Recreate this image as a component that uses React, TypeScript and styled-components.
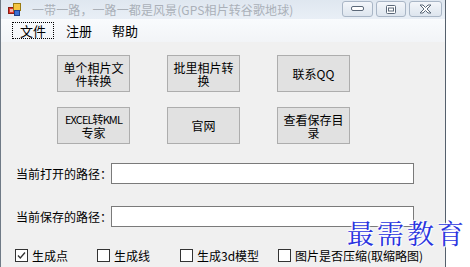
import * as React from "react";
import styled, { createGlobalStyle } from "styled-components";

const cjk = `"Noto Sans CJK SC", "Noto Sans", sans-serif`;

const Global = createGlobalStyle`
	html, body {
		margin: 0;
		padding: 0;
		background: #ffffff;
	}
	body {
		font-family: ${cjk};
		font-size: 12px;
		color: #000;
	}
`;

const Page = styled.div`
	position: relative;
	display: flex;
	width: 470px;
	height: 267px;
	overflow: hidden;
	background: #ffffff;
`;

const Window = styled.div`
	display: flex;
	flex-direction: column;
	width: 446px;
	height: 267px;
	box-sizing: border-box;
	border-left: 1px solid #6f7a86;
	border-right: 1px solid #55606c;
	background: #f0f0f0;
`;

const TitleBar = styled.div`
	display: flex;
	align-items: center;
	height: 19px;
	padding-left: 7px;
	background: linear-gradient(#dfe7f0, #e9eff6);
`;

const Title = styled.div`
	flex: 1;
	margin-left: 11px;
	font-size: 12px;
	color: #aab0b8;
	white-space: nowrap;
	letter-spacing: 0.1px;
`;

const Controls = styled.div`
	display: flex;
	gap: 3px;
	align-self: flex-start;
	margin-top: 1px;
	margin-right: 3px;
`;

const CtrlButton = styled.div<{ $w: number }>`
	display: flex;
	align-items: center;
	justify-content: center;
	width: ${(p) => p.$w}px;
	height: 16px;
	box-sizing: border-box;
	border: 1px solid #a9b6c6;
	border-radius: 3px;
	background: linear-gradient(#f3f6fa, #dde5ee);
`;

const MenuBar = styled.div`
	display: flex;
	align-items: center;
	height: 23px;
	padding-left: 11px;
	background: linear-gradient(#f9fbfd, #f2f4f7);
	border-bottom: 1px solid #f0f0f0;
`;

const MenuItem = styled.div<{ $focus?: boolean }>`
	display: flex;
	align-items: center;
	justify-content: center;
	height: 17px;
	padding: 0 7px;
	margin-right: 4px;
	box-sizing: border-box;
	border: 1px dotted ${(p) => (p.$focus ? "#000" : "transparent")};
	font-size: 13px;
	line-height: 1;
`;

const Body = styled.div`
	display: flex;
	flex-direction: column;
	padding: 12px 0 0 0;
`;

const ButtonGrid = styled.div`
	display: grid;
	grid-template-columns: repeat(3, 73px);
	grid-auto-rows: 37px;
	column-gap: 37px;
	row-gap: 15px;
	margin-left: 56px;
`;

const FormButton = styled.div`
	display: flex;
	flex-direction: column;
	align-items: center;
	justify-content: center;
	box-sizing: border-box;
	border: 1px solid #adadad;
	background: #e1e1e1;
	text-align: center;
	font-size: 12px;
	line-height: 13px;
`;

const ButtonLine = styled.span<{ $narrow?: boolean }>`
	white-space: nowrap;
	letter-spacing: ${(p) => (p.$narrow ? "-0.9px" : "0")};
	font-size: ${(p) => (p.$narrow ? "11px" : "12px")};
`;

const PathRow = styled.div<{ $top: number }>`
	display: flex;
	align-items: center;
	margin-top: ${(p) => p.$top}px;
	margin-left: 15px;
`;

const PathLabel = styled.div`
	width: 95px;
	font-size: 12px;
	white-space: nowrap;
`;

const PathInput = styled.div`
	width: 303px;
	height: 21px;
	box-sizing: border-box;
	border: 1px solid #7a7a7a;
	background: #ffffff;
`;

const CheckRow = styled.div`
	display: flex;
	align-items: center;
	margin-top: 20px;
	margin-left: 14px;
`;

const Check = styled.label<{ $w: number }>`
	display: flex;
	align-items: center;
	gap: 4px;
	width: ${(p) => p.$w}px;
	font-size: 12px;
	white-space: nowrap;
`;

const Box = styled.span`
	display: flex;
	align-items: center;
	justify-content: center;
	width: 13px;
	height: 13px;
	box-sizing: border-box;
	border: 1px solid #333;
	background: #fff;
`;

const Watermark = styled.div`
	position: absolute;
	left: 347px;
	top: 213px;
	font-family: "Noto Serif CJK SC", "Noto Sans CJK SC", serif;
	font-size: 27px;
	letter-spacing: 3px;
	color: #2b34e0;
	text-shadow: 0 0 2px #fff, 0 0 2px #fff, 1px 1px 1px #fff, -1px -1px 1px #fff;
	white-space: nowrap;
`;

const AppIcon = () => (
	<svg width="13" height="13" viewBox="0 0 13 13">
		<rect x="0.5" y="4.5" width="6" height="6" fill="#e03a2c" stroke="#8a1d14" />
		<rect x="5.5" y="0.5" width="7" height="7" fill="#f4c542" stroke="#9a7a10" />
		<rect x="6.5" y="7.5" width="5" height="5" fill="#3b6fd4" stroke="#1c3f8a" />
		<rect x="2" y="6" width="3" height="3" fill="#fff" opacity="0.6" />
	</svg>
);

const Tick = () => (
	<svg width="11" height="11" viewBox="0 0 11 11">
		<path d="M2 5.5 L4.3 8 L9 2.5" fill="none" stroke="#333" strokeWidth="1.3" />
	</svg>
);

export default function App() {
	const buttons = [
		["单个相片文", "件转换"],
		["批里相片转", "换"],
		["联系QQ"],
		["EXCEL转KML", "专家"],
		["官网"],
		["查看保存目", "录"],
	];
	const checks = [
		{ text: "生成点", on: true, w: 82 },
		{ text: "生成线", on: false, w: 83 },
		{ text: "生成3d模型", on: false, w: 98 },
		{ text: "图片是否压缩(取缩略图)", on: false, w: 160 },
	];

	return (
		<Page>
			<Global />
			<Window>
				<TitleBar>
					<AppIcon />
					<Title>一带一路，一路一都是风景(GPS相片转谷歌地球)</Title>
					<Controls>
						<CtrlButton $w={31}>
							<svg width="13" height="6" viewBox="0 0 13 6">
								<rect x="0.5" y="0.5" width="12" height="4" rx="1.5" fill="#fff" stroke="#5b6878" />
							</svg>
						</CtrlButton>
						<CtrlButton $w={30}>
							<svg width="10" height="9" viewBox="0 0 10 9">
								<rect x="0.5" y="0.5" width="9" height="8" rx="1" fill="#fff" stroke="#5b6878" />
								<rect x="2.5" y="3" width="5" height="3" fill="none" stroke="#5b6878" />
							</svg>
						</CtrlButton>
						<CtrlButton $w={33}>
							<svg width="13" height="10" viewBox="0 0 13 10">
								<path
									d="M1 1 H4 L6.5 3.5 L9 1 H12 L8 5 L12 9 H9 L6.5 6.5 L4 9 H1 L5 5 Z"
									fill="#fff"
									stroke="#5b6878"
									strokeLinejoin="round"
								/>
							</svg>
						</CtrlButton>
					</Controls>
				</TitleBar>
				<MenuBar>
					<MenuItem $focus>文件</MenuItem>
					<MenuItem>注册</MenuItem>
					<MenuItem>帮助</MenuItem>
				</MenuBar>
				<Body>
					<ButtonGrid>
						{buttons.map((lines) => (
							<FormButton key={lines.join("")}>
								{lines.map((l) => (
									<ButtonLine key={l} $narrow={/[A-Z]{3}/.test(l)}>
										{l}
									</ButtonLine>
								))}
							</FormButton>
						))}
					</ButtonGrid>
					<PathRow $top={19}>
						<PathLabel>当前打开的路径：</PathLabel>
						<PathInput />
					</PathRow>
					<PathRow $top={22}>
						<PathLabel>当前保存的路径：</PathLabel>
						<PathInput />
					</PathRow>
					<CheckRow>
						{checks.map((c) => (
							<Check key={c.text} $w={c.w}>
								<Box>{c.on && <Tick />}</Box>
								{c.text}
							</Check>
						))}
					</CheckRow>
				</Body>
			</Window>
			<Watermark>最需教育</Watermark>
		</Page>
	);
}
